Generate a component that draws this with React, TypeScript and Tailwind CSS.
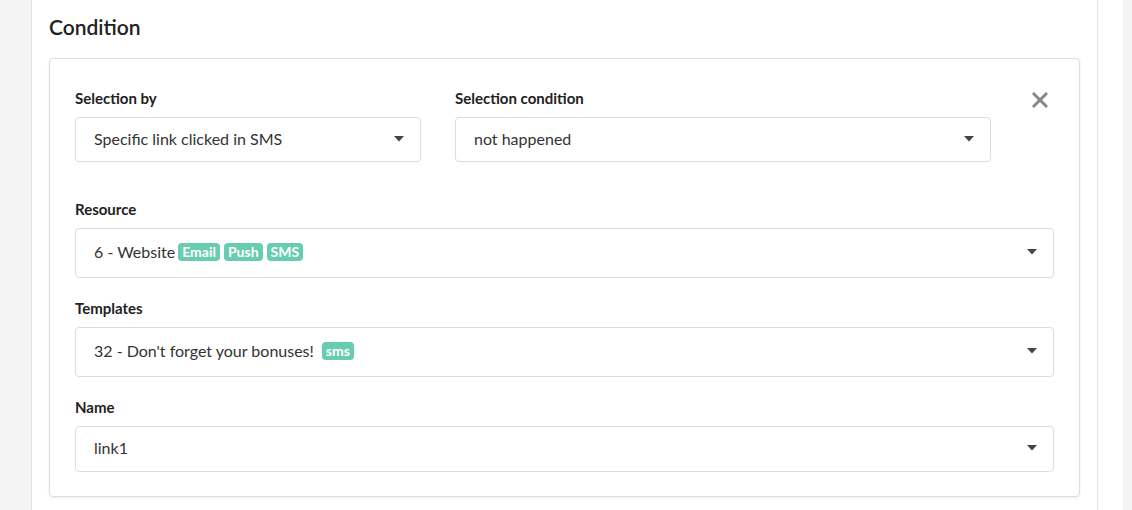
import React from 'react';

const font = { fontFamily: 'Lato, "Noto Sans", sans-serif' };

const Caret = () => (
  <svg width="10" height="6" viewBox="0 0 10 6" className="shrink-0">
    <path d="M0 0h10L5 5.5z" fill="#444" />
  </svg>
);

const Badge: React.FC<{ children: React.ReactNode }> = ({ children }) => (
  <span className="inline-flex items-center h-[18px] px-[4px] rounded-[4px] bg-[#68ccb0] text-white text-[14px] font-bold leading-none">
    {children}
  </span>
);

interface SelectProps {
  children: React.ReactNode;
  className?: string;
  tall?: boolean;
}

const Select: React.FC<SelectProps> = ({ children, className = '', tall }) => (
  <div
    className={`flex items-center justify-between pl-[18px] pr-[16px] border border-[#dcdcdc] rounded-[4px] bg-white text-[16px] text-[#333] ${
      tall ? 'h-[50px] pb-[3px]' : 'h-[45px] pb-[2px]'
    } ${className}`}
  >
    <div className="flex items-center">{children}</div>
    <Caret />
  </div>
);

const Label: React.FC<{ children: React.ReactNode }> = ({ children }) => (
  <div className="text-[15px] leading-[20px] font-bold text-[#222] mb-[9px]">{children}</div>
);

export default function App() {
  return (
    <div className="w-[1132px] h-[510px] overflow-hidden bg-[#f4f4f4]" style={font}>
      <div className="ml-[31px] w-[1092px] h-full bg-white border-l border-[#e2e2e2]">
        <div className="w-[1066px] h-full border-r border-[#e2e2e2] pl-[17px] pt-[13px]">
          <h2 className="text-[21px] leading-[28px] font-semibold text-[#222] mb-[17px]">Condition</h2>
          <div className="w-[1031px] border border-[#dddddd] rounded-[4px] shadow-[0_1px_3px_rgba(0,0,0,0.08)] pl-[25px] pr-[25px] pt-[29px] pb-[24px]">
            <div className="flex items-start">
              <div className="w-[346px]">
                <Label>Selection by</Label>
                <Select>Specific link clicked in SMS</Select>
              </div>
              <div className="w-[536px] ml-[34px]">
                <Label>Selection condition</Label>
                <Select>not happened</Select>
              </div>
              <button className="ml-[40px] mt-[3px] text-[#888]">
                <svg width="18" height="18" viewBox="0 0 18 18">
                  <path d="M2 2l14 14M16 2L2 16" stroke="#888" strokeWidth="3" />
                </svg>
              </button>
            </div>

            <div className="mt-[37px]">
              <Label>Resource</Label>
              <Select tall>
                <span>6 - Website</span>
                <span className="flex gap-[4px] ml-[3px]">
                  <Badge>Email</Badge>
                  <Badge>Push</Badge>
                  <Badge>SMS</Badge>
                </span>
              </Select>
            </div>

            <div className="mt-[20px]">
              <Label>Templates</Label>
              <Select tall>
                <span>32 - Don't forget your bonuses!</span>
                <span className="ml-[8px] flex">
                  <Badge>sms</Badge>
                </span>
              </Select>
            </div>

            <div className="mt-[20px]">
              <Label>Name</Label>
              <Select className="h-[46px]">link1</Select>
            </div>
          </div>
        </div>
      </div>
    </div>
  );
}
